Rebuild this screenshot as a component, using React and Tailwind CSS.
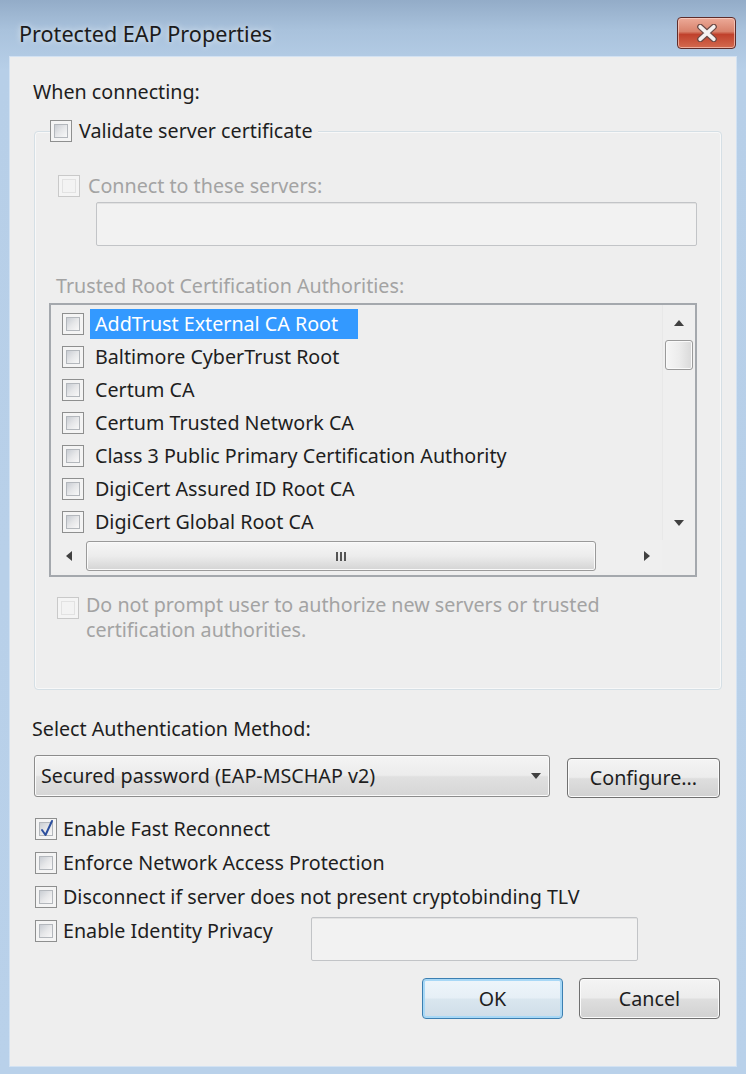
import React from "react";

function Cb({ checked = false, disabled = false }) {
  return (
    <span
      className={`inline-flex w-[22px] h-[22px] shrink-0 p-[3px] border ${
        disabled ? "border-[#c9c9c9] bg-[#f4f4f4]" : "border-[#8e8f8f] bg-[#f4f4f4]"
      }`}
    >
      <span
        className={`relative flex-1 border ${
          disabled
            ? "border-[#e2e2e2] bg-[#f3f3f3]"
            : "border-[#b3b7bc] bg-[linear-gradient(135deg,#c9cdd3_0%,#e6e7e9_50%,#f8f8f8_100%)]"
        }`}
      >
        {checked && (
          <svg
            viewBox="0 0 16 20"
            className="absolute left-[-1px] top-[-4px] w-[16px] h-[20px]"
          >
            <path
              d="M3 11 L6.5 16 L13 2"
              fill="none"
              stroke="#2c4f9e"
              strokeWidth="2"
              strokeLinecap="round"
              strokeLinejoin="round"
            />
          </svg>
        )}
      </span>
    </span>
  );
}

function Tri({ dir, className = "" }) {
  const d =
    dir === "up"
      ? "M0 6 L5 0 L10 6 Z"
      : dir === "down"
      ? "M0 0 L10 0 L5 6 Z"
      : dir === "left"
      ? "M6 0 L6 10 L0 5 Z"
      : "M0 0 L6 5 L0 10 Z";
  const vert = dir === "up" || dir === "down";
  return (
    <svg
      viewBox={vert ? "0 0 10 6" : "0 0 6 10"}
      className={`${vert ? "w-[10px] h-[6px]" : "w-[6px] h-[10px]"} ${className}`}
    >
      <path d={d} fill="#404040" />
    </svg>
  );
}

const certs = [
  "AddTrust External CA Root",
  "Baltimore CyberTrust Root",
  "Certum CA",
  "Certum Trusted Network CA",
  "Class 3 Public Primary Certification Authority",
  "DigiCert Assured ID Root CA",
  "DigiCert Global Root CA",
];

const btn =
  "flex items-center justify-center rounded-[4px] border border-[#707070] bg-[linear-gradient(180deg,#f4f4f4_0%,#ececec_48%,#dedede_52%,#d1d1d1_100%)] shadow-[inset_0_0_0_1px_#fbfbfb] text-[#1e1e1e]";

export default function App() {
  return (
    <div className="w-[746px] h-[1074px] flex flex-col bg-[linear-gradient(180deg,#93acc8_0px,#a9c2dc_30px,#b7cfe8_70px,#b9d1ea_100%)] font-['Noto_Sans',sans-serif] text-[19.7px] text-[#1e1e1e] overflow-hidden">
      {/* Title bar */}
      <div className="h-[57px] flex items-start shrink-0">
        <div className="pl-[19px] pt-[21px] text-[21.6px] leading-[26px] text-[#1b1b1b] [text-shadow:0_0_6px_rgba(255,255,255,0.8)]">
          Protected EAP Properties
        </div>
        <div className="ml-auto mr-[10px] mt-[17px] w-[59px] h-[32px] rounded-[4px] border border-[#5e2c2a] bg-[linear-gradient(180deg,#ecaa98_0%,#d8826c_45%,#c0412c_55%,#d36a4f_100%)] shadow-[inset_0_0_0_1px_rgba(255,220,210,0.6)] flex items-center justify-center">
          <svg viewBox="0 0 20 16" className="w-[24px] h-[18px]">
            <path
              d="M4 2.5 L16 13.5 M16 2.5 L4 13.5"
              stroke="#6b4a46"
              strokeWidth="5.5"
              strokeLinecap="round"
            />
            <path
              d="M4 2.5 L16 13.5 M16 2.5 L4 13.5"
              stroke="#f4f1f0"
              strokeWidth="3.4"
              strokeLinecap="round"
            />
          </svg>
        </div>
      </div>

      {/* Client area */}
      <div className="flex-1 mx-[10px] mb-[8px] bg-[#eeeeee] shadow-[0_0_0_1px_#d3e2f2] flex flex-col">
        <div className="mt-[23px] ml-[23px] leading-[24px]">When connecting:</div>

        {/* Group box */}
        <div className="relative mt-[27px] ml-[24px] w-[688px] h-[559px] border border-[#d5dfe5] rounded-[4px] shadow-[inset_0_0_0_1px_#f8f8f8] flex flex-col">
          <div className="absolute left-[15px] top-[-13px] h-[24px] bg-[#eeeeee] pr-[5px] flex items-center gap-[7px] leading-[24px]">
            <Cb />
            <span>Validate server certificate</span>
          </div>

          <div className="mt-[42px] ml-[23px] h-[24px] flex items-center gap-[8px] text-[#a3a3a3]">
            <Cb disabled />
            <span className="leading-[24px]">Connect to these servers:</span>
          </div>

          <div className="mt-[4px] ml-[61px] w-[601px] h-[44px] border border-[#c2c4c7] rounded-[2px] bg-[#f2f2f2] shadow-[inset_0_1px_0_#e2e2e2]" />

          <div className="mt-[28px] ml-[21px] leading-[24px] text-[#a3a3a3]">
            Trusted Root Certification Authorities:
          </div>

          {/* List */}
          <div className="mt-[5px] ml-[14px] w-[648px] h-[274px] border-2 border-[#a4a8ad] bg-[#eeeeee] flex flex-col">
            <div className="h-[235px] flex">
              <div className="flex-1 pt-[2px] flex flex-col overflow-hidden">
                {certs.map((c, i) => (
                  <div key={c} className="h-[33px] flex items-center pl-[11px] shrink-0">
                    <Cb />
                    <span
                      className={`ml-[6px] h-[30px] pl-[5px] pr-[20px] flex items-center leading-[24px] whitespace-nowrap ${
                        i === 0 ? "bg-[#3399ff] text-white" : ""
                      }`}
                    >
                      {c}
                    </span>
                  </div>
                ))}
              </div>
              {/* vertical scrollbar */}
              <div className="w-[33px] flex flex-col items-center bg-[#efefef] border-l border-[#e8e8e8]">
                <div className="h-[35px] flex items-center justify-center">
                  <Tri dir="up" />
                </div>
                <div className="w-[28px] h-[30px] rounded-[3px] border border-[#9a9a9a] bg-[linear-gradient(90deg,#f6f6f6_0%,#ececec_50%,#d9d9d9_100%)] shadow-[inset_0_0_0_1px_#fafafa]" />
                <div className="flex-1" />
                <div className="h-[35px] flex items-center justify-center">
                  <Tri dir="down" />
                </div>
              </div>
            </div>
            {/* horizontal scrollbar */}
            <div className="h-[32px] flex items-stretch bg-[#efefef]">
              <div className="w-[35px] flex items-center justify-center">
                <Tri dir="left" />
              </div>
              <div className="my-[1px] w-[510px] rounded-[3px] border border-[#9a9a9a] bg-[linear-gradient(180deg,#f6f6f6_0%,#ececec_50%,#d4d4d4_100%)] shadow-[inset_0_0_0_1px_#fafafa] flex items-center justify-center gap-[2px]">
                <span className="w-[2px] h-[9px] bg-[#555555]" />
                <span className="w-[2px] h-[9px] bg-[#555555]" />
                <span className="w-[2px] h-[9px] bg-[#555555]" />
              </div>
              <div className="flex-1 flex items-center justify-end pr-[12px]">
                <Tri dir="right" />
              </div>
              <div className="w-[33px] bg-[#eeeeee]" />
            </div>
          </div>

          <div className="mt-[15px] ml-[22px] flex items-start gap-[7px] text-[#a3a3a3]">
            <span className="mt-[1px]">
              <Cb disabled />
            </span>
            <span className="leading-[25px]">
              Do not prompt user to authorize new servers or trusted
              <br />
              certification authorities.
            </span>
          </div>
        </div>

        <div className="mt-[27px] ml-[22px] leading-[24px]">Select Authentication Method:</div>

        <div className="mt-[14px] flex items-start">
          <div className="ml-[24px] w-[516px] h-[42px] rounded-[3px] border border-[#8c8c8c] bg-[linear-gradient(180deg,#f4f4f4_0%,#ececec_48%,#e0e0e0_52%,#d6d6d6_100%)] shadow-[inset_0_0_0_1px_#fafafa] flex items-center pl-[6px] pr-[8px]">
            <span className="leading-[24px] flex-1">Secured password (EAP-MSCHAP v2)</span>
            <Tri dir="down" />
          </div>
          <div className={`ml-[17px] mt-[3px] w-[153px] h-[40px] ${btn}`}>Configure...</div>
        </div>

        <div className="mt-[14px] flex flex-col">
          <div className="h-[34px] ml-[25px] flex items-center gap-[6px]">
            <Cb checked />
            <span className="leading-[24px]">Enable Fast Reconnect</span>
          </div>
          <div className="h-[34px] ml-[25px] flex items-center gap-[6px]">
            <Cb />
            <span className="leading-[24px]">Enforce Network Access Protection</span>
          </div>
          <div className="h-[34px] ml-[25px] flex items-center gap-[6px]">
            <Cb />
            <span className="leading-[24px]">Disconnect if server does not present cryptobinding TLV</span>
          </div>
          <div className="ml-[25px] flex items-start">
            <div className="w-[276px] h-[34px] flex items-center gap-[6px]">
              <Cb />
              <span className="leading-[24px] whitespace-nowrap">Enable Identity Privacy</span>
            </div>
            <div className="mt-[3px] w-[327px] h-[44px] border border-[#c2c4c7] rounded-[2px] bg-[#f2f2f2] shadow-[inset_0_1px_0_#e2e2e2]" />
          </div>
        </div>

        <div className="mt-[17px] flex justify-end pr-[16px] gap-[16px]">
          <div className="w-[141px] h-[41px] flex items-center justify-center rounded-[4px] border border-[#3c7fb1] bg-[linear-gradient(180deg,#eef6fb_0%,#e6eff6_48%,#d9e6ef_52%,#cfdde8_100%)] shadow-[inset_0_0_0_2px_#a8d8f6] text-[#1e1e1e]">
            OK
          </div>
          <div className={`w-[141px] h-[41px] ${btn}`}>Cancel</div>
        </div>
      </div>
    </div>
  );
}
